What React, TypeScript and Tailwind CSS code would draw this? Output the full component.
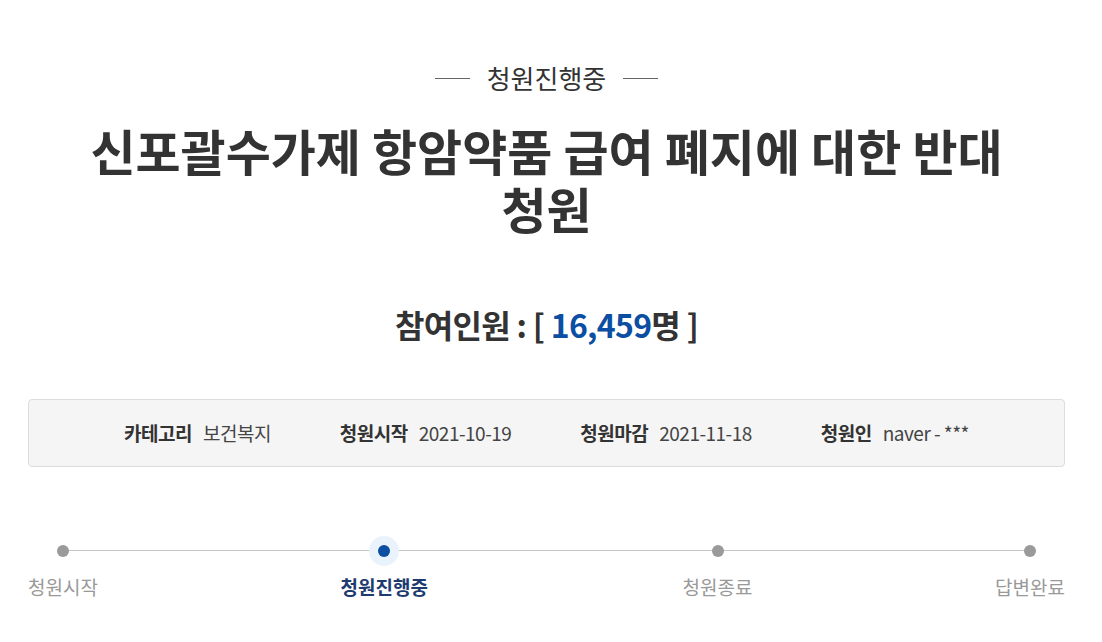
import React from 'react';

const steps = [
  { label: '청원시작', active: false, shift: '' },
  { label: '청원진행중', active: true, shift: 'mr-[12px]' },
  { label: '청원종료', active: false, shift: '' },
  { label: '답변완료', active: false, shift: '' },
];

const info = [
  { label: '카테고리', value: '보건복지' },
  { label: '청원시작', value: '2021-10-19' },
  { label: '청원마감', value: '2021-11-18' },
  { label: '청원인', value: 'naver - ***' },
];

export default function App() {
  return (
    <div
      className="min-h-screen bg-white pl-[28px] pr-[37px] text-[#333]"
      style={{ fontFamily: '"Noto Sans CJK KR", "Noto Sans", sans-serif' }}
    >
      {/* Status label */}
      <div className="flex items-center justify-center gap-[17px] pt-[60px]">
        <span className="h-px w-[35px] bg-[#666]" />
        <span className="text-[26px] leading-[36px] text-[#333]">청원진행중</span>
        <span className="h-px w-[35px] bg-[#666]" />
      </div>

      {/* Title */}
      <h1 className="mt-[25px] text-center text-[49px] font-bold leading-[58px] text-[#333]">
        신포괄수가제 항암약품 급여 폐지에 대한 반대
        <br />
        청원
      </h1>

      {/* Participants */}
      <p className="mt-[67px] text-center text-[32px] font-bold leading-[40px] tracking-[-0.7px] text-[#333]">
        참여인원 : [ <span className="text-[#0b4ea2]">16,459</span>명 ]
      </p>

      {/* Info box */}
      <div className="mt-[55px] flex h-[68px] items-center justify-center gap-[69px] rounded-[4px] border border-[#dcdcdc] bg-[#f5f5f5]">
        {info.map((item) => (
          <div key={item.label} className="flex items-center gap-[11px] text-[19px] tracking-[-0.5px]">
            <span className="font-bold text-[#333]">{item.label}</span>
            <span className="text-[#444]">{item.value}</span>
          </div>
        ))}
      </div>

      {/* Progress */}
      <div className="relative mt-[70px] flex justify-between">
        <div className="absolute left-[33px] right-[34px] top-[13px] h-px bg-[#c4c4c4]" />
        {steps.map((step) => (
          <div key={step.label} className={`relative flex flex-col items-center ${step.shift}`}>
            <div className="flex h-[28px] w-[28px] items-center justify-center">
              {step.active ? (
                <div className="flex h-[30px] w-[30px] shrink-0 items-center justify-center rounded-full bg-[#eaf2fc]">
                  <div className="h-[12px] w-[12px] rounded-full bg-[#0b4ea2]" />
                </div>
              ) : (
                <div className="h-[12px] w-[12px] rounded-full bg-[#9a9a9a]" />
              )}
            </div>
            <span
              className={
                step.active
                  ? 'mt-[8px] text-[19px] font-bold leading-[28px] text-[#1d3b6f]'
                  : 'mt-[8px] text-[19px] leading-[28px] text-[#999]'
              }
            >
              {step.label}
            </span>
          </div>
        ))}
      </div>
    </div>
  );
}
